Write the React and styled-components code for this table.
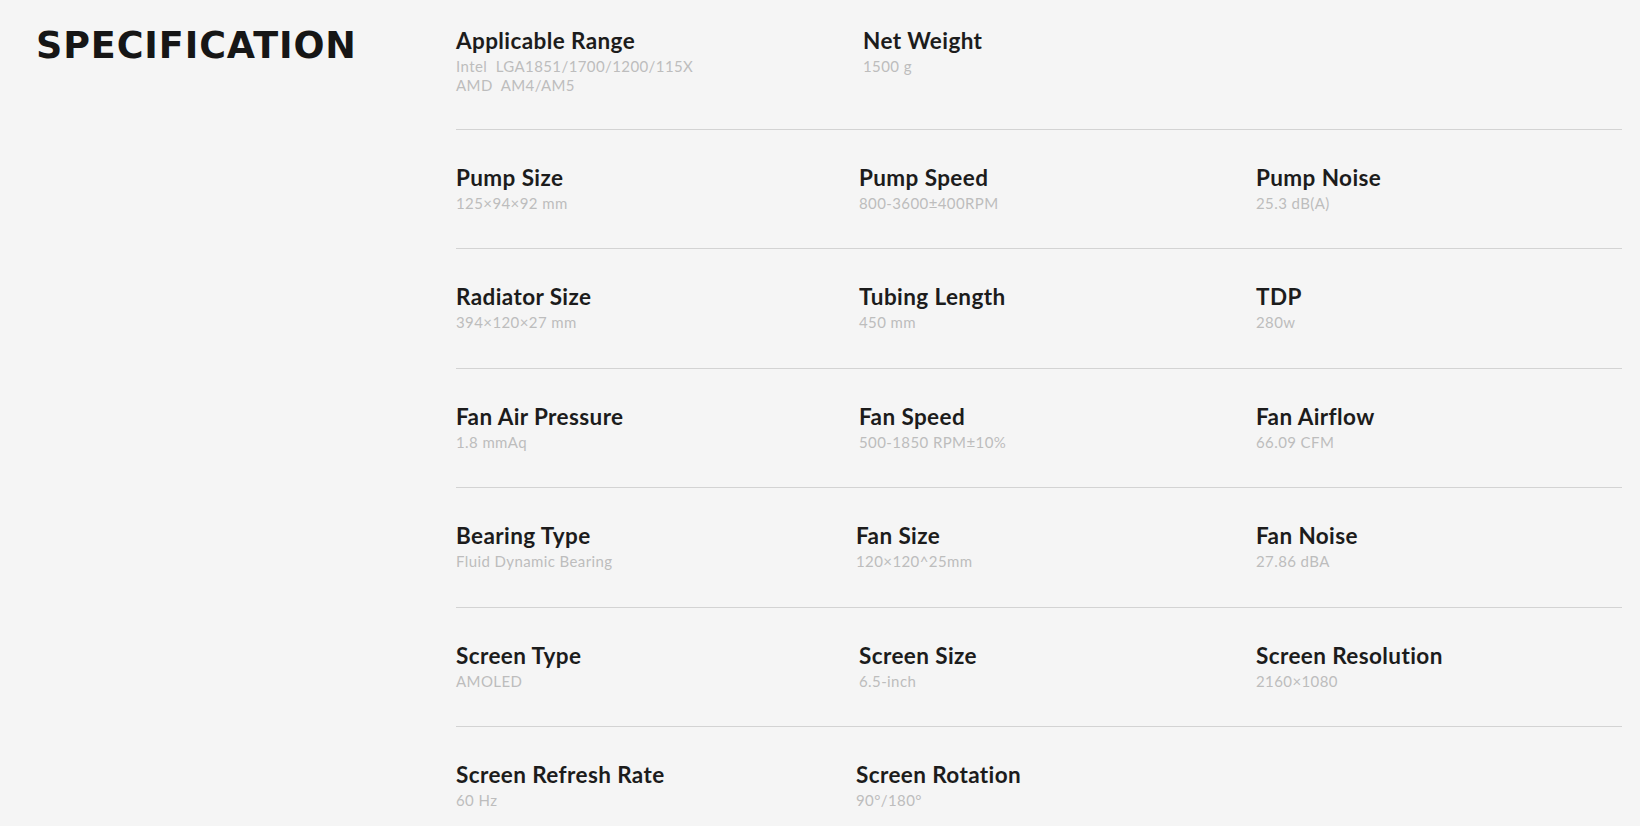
import React from "react";
import styled, { createGlobalStyle } from "styled-components";

const Global = createGlobalStyle`
  html, body {
    margin: 0;
    padding: 0;
    background: #f5f5f5;
  }
  body {
    font-family: Lato, "Noto Sans", sans-serif;
    -webkit-font-smoothing: antialiased;
  }
`;

const Page = styled.section`
  display: grid;
  grid-template-columns: 420px 1166px;
  padding: 0 18px 0 36px;
  min-height: 826px;
  background: #f5f5f5;
  box-sizing: border-box;
`;

const Heading = styled.h2`
  margin: 24px 0 0;
  font-family: "DejaVu Sans", sans-serif;
  font-weight: 700;
  font-size: 36.5px;
  line-height: 1.2;
  color: #161616;
  letter-spacing: 0.9px;
`;

const List = styled.div`
  display: flex;
  flex-direction: column;
`;

const Row = styled.div`
  display: grid;
  grid-template-columns: 403px 397px 1fr;
  padding: 33px 0 35.4px;
  border-bottom: 1px solid #d3d3d3;
  &:first-child {
    padding: 26px 0 34px;
  }
`;

const Item = styled.div`
  display: flex;
  flex-direction: column;
  gap: 1px;
  margin-left: ${(p) => p.$nudge || 0}px;
`;

const Label = styled.div`
  font-family: Lato, "Noto Sans", sans-serif;
  font-weight: 700;
  font-size: 22.5px;
  line-height: 30px;
  letter-spacing: 0.4px;
  color: #1c1c1c;
`;

const Value = styled.div`
  font-family: Lato, "Noto Sans", sans-serif;
  font-weight: 400;
  font-size: 15px;
  line-height: 19px;
  letter-spacing: 0.4px;
  color: #bdbdbd;
  white-space: pre-line;
`;

const rows = [
  [
    { label: "Applicable Range", value: "Intel\u00a0\u00a0LGA1851/1700/1200/115X\nAMD\u00a0\u00a0AM4/AM5" },
    { label: "Net Weight", value: "1500 g", nudge: 4 },
  ],
  [
    { label: "Pump Size", value: "125×94×92 mm" },
    { label: "Pump Speed", value: "800-3600±400RPM" },
    { label: "Pump Noise", value: "25.3 dB(A)" },
  ],
  [
    { label: "Radiator Size", value: "394×120×27 mm" },
    { label: "Tubing Length", value: "450 mm" },
    { label: "TDP", value: "280w" },
  ],
  [
    { label: "Fan Air Pressure", value: "1.8 mmAq" },
    { label: "Fan Speed", value: "500-1850 RPM±10%" },
    { label: "Fan Airflow", value: "66.09 CFM" },
  ],
  [
    { label: "Bearing Type", value: "Fluid Dynamic Bearing" },
    { label: "Fan Size", value: "120×120^25mm", nudge: -3 },
    { label: "Fan Noise", value: "27.86 dBA" },
  ],
  [
    { label: "Screen Type", value: "AMOLED" },
    { label: "Screen Size", value: "6.5-inch" },
    { label: "Screen Resolution", value: "2160×1080" },
  ],
  [
    { label: "Screen Refresh Rate", value: "60 Hz" },
    { label: "Screen Rotation", value: "90°/180°", nudge: -3 },
  ],
];

export default function App() {
  return (
    <>
      <Global />
      <Page>
        <Heading>SPECIFICATION</Heading>
        <List>
          {rows.map((row, i) => (
            <Row key={i}>
              {row.map((it) => (
                <Item key={it.label} $nudge={it.nudge}>
                  <Label>{it.label}</Label>
                  <Value>{it.value}</Value>
                </Item>
              ))}
            </Row>
          ))}
        </List>
      </Page>
    </>
  );
}
